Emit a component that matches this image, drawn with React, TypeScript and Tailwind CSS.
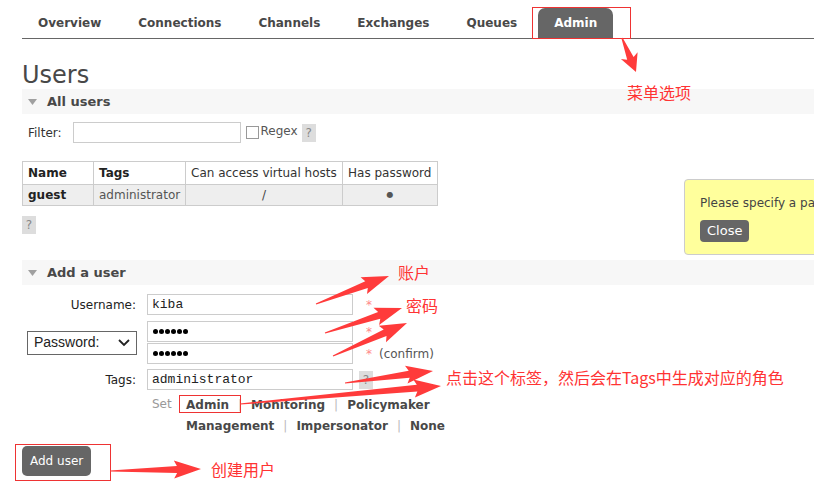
import React from "react";

const navItems = ["Overview", "Connections", "Channels", "Exchanges", "Queues"];

function arrowPoints(x1: number, y1: number, x2: number, y2: number) {
  const dx = x2 - x1;
  const dy = y2 - y1;
  const len = Math.sqrt(dx * dx + dy * dy);
  const ux = dx / len;
  const uy = dy / len;
  const nx = -uy;
  const ny = ux;
  const head = Math.min(24, len * 0.4);
  const bx = x2 - ux * head;
  const by = y2 - uy * head;
  const pts: [number, number][] = [
    [x1 + nx * 0.6, y1 + ny * 0.6],
    [bx + nx * 3.5, by + ny * 3.5],
    [bx - ux * 3 + nx * 9, by - uy * 3 + ny * 9],
    [x2, y2],
    [bx - ux * 3 - nx * 9, by - uy * 3 - ny * 9],
    [bx - nx * 3.5, by - ny * 3.5],
    [x1 - nx * 0.6, y1 - ny * 0.6],
  ];
  return pts.map((p) => p.map((v) => v.toFixed(1)).join(",")).join(" ");
}

const arrows: [number, number, number, number][] = [
  [622, 38, 636, 72],
  [316, 304, 389, 276],
  [325, 333, 402, 308],
  [333, 356, 407, 323],
  [345, 383, 433, 371],
  [240, 404, 441, 386],
  [110, 471, 201, 469],
];

function Help({ className = "" }: { className?: string }) {
  return (
    <span
      className={`inline-flex w-[14px] h-[18px] items-center justify-center bg-[#dddddd] text-[#888] text-[12px] ${className}`}
    >
      ?
    </span>
  );
}

function SectionBar({ title }: { title: string }) {
  return (
    <div className="flex items-center h-[25px] bg-[#f7f7f7] pl-[6px]">
      <svg width="9" height="6" viewBox="0 0 9 6" className="mr-[10px]">
        <polygon points="0,0 9,0 4.5,6" fill="#a0a0a0" />
      </svg>
      <span className="font-bold text-[13px] text-[#484848]">{title}</span>
    </div>
  );
}

function FakeInput({ value }: { value: string }) {
  return (
    <div className="w-[206px] h-[21px] border border-[#cccccc] flex items-center pl-[4px] text-[13px] text-[#222] font-['Liberation_Mono',monospace]">
      {value}
    </div>
  );
}

function Dots() {
  return (
    <div className="w-[206px] h-[21px] border border-[#cccccc] flex items-center gap-[1px] pl-[5px]">
      {[0, 1, 2, 3, 4, 5].map((i) => (
        <span key={i} className="w-[5px] h-[5px] rounded-full bg-black" />
      ))}
    </div>
  );
}

function Star() {
  return <span className="ml-[13px] text-[#ff8888] text-[12px] self-start mt-[2px]">*</span>;
}

function Sep() {
  return <span className="mx-[9px] font-normal text-[#bbb]">|</span>;
}

export default function App() {
  return (
    <div className="relative w-[814px] h-[490px] overflow-hidden bg-white text-[12px] text-[#444] font-['DejaVu_Sans',sans-serif]">
      <div className="pl-[22px]">
        {/* Nav */}
        <div className="flex items-end gap-[5px] pt-[8px] border-b border-[#666]">
          {navItems.map((n) => (
            <div key={n} className="h-[30px] px-4 flex items-center font-bold text-[#484848]">
              {n}
            </div>
          ))}
          <div className="h-[30px] px-4 flex items-center font-bold text-white bg-[#666] rounded-t-[7px]">
            Admin
          </div>
        </div>

        <h1 className="mt-[22px] text-[24px] leading-[28px] text-[#484848]">Users</h1>

        <SectionBar title="All users" />

        <div className="mt-[8px] pl-[6px] flex items-center">
          <span className="text-[12px] text-[#333]">Filter:</span>
          <div className="ml-[11px] w-[168px] h-[21px] border border-[#cccccc]" />
          <span className="ml-[5px] w-[13px] h-[13px] border border-[#999]" />
          <span className="ml-[2px] text-[12px] text-[#555] -mt-[3px]">Regex</span>
          <Help className="ml-[4px]" />
        </div>

        <table className="mt-[18px] border-collapse text-[12px] whitespace-nowrap">
          <thead>
            <tr className="h-[23px]">
              <th className="w-[71px] border border-[#cccccc] text-left pl-[5px] font-bold text-[#222]">Name</th>
              <th className="w-[92px] border border-[#cccccc] text-left pl-[5px] font-bold text-[#222]">Tags</th>
              <th className="w-[157px] border border-[#cccccc] text-left pl-[5px] font-normal text-[#333]">
                Can access virtual hosts
              </th>
              <th className="w-[95px] border border-[#cccccc] text-left pl-[5px] font-normal text-[#333]">
                Has password
              </th>
            </tr>
          </thead>
          <tbody>
            <tr className="h-[21px] bg-[#eeeeee]">
              <td className="border border-[#cccccc] pl-[5px] font-bold text-[#222]">guest</td>
              <td className="border border-[#cccccc] pl-[5px] text-[#555]">administrator</td>
              <td className="border border-[#cccccc] text-center text-[#444]">/</td>
              <td className="border border-[#cccccc] text-center text-[#555] text-[8px]">●</td>
            </tr>
          </tbody>
        </table>

        <Help className="mt-[10px]" />

        <div className="mt-[26px]">
          <SectionBar title="Add a user" />
        </div>

        {/* Form */}
        <div className="mt-[9px] flex flex-col text-[12px]">
          <div className="flex items-center">
            <span className="w-[125px] text-right pr-[11px] text-[#222]">Username:</span>
            <FakeInput value="kiba" />
            <Star />
          </div>

          <div className="mt-[6px] flex items-center">
            <div className="w-[125px] pl-[5px]">
              <div className="w-[110px] h-[24px] border border-[#666] flex items-center justify-between pl-[6px] pr-[6px] font-['Liberation_Sans',sans-serif] text-[14px] text-[#222]">
                <span>Password:</span>
                <svg width="12" height="8" viewBox="0 0 12 8">
                  <polyline points="1,1 6,6 11,1" fill="none" stroke="#222" strokeWidth="1.8" />
                </svg>
              </div>
            </div>
            <div className="flex flex-col gap-[1px]">
              <div className="flex items-center">
                <Dots />
                <Star />
              </div>
              <div className="flex items-center">
                <Dots />
                <Star />
                <span className="ml-[7px] text-[#555]">(confirm)</span>
              </div>
            </div>
          </div>

          <div className="mt-[5px] flex items-center">
            <span className="w-[125px] text-right pr-[11px] text-[#222]">Tags:</span>
            <FakeInput value="administrator" />
            <Help className="ml-[6px]" />
          </div>

          <div className="flex text-[12px] mt-[5px]">
            <span className="ml-[130px] w-[34px] text-[#999]">Set</span>
            <div className="flex flex-col">
              <div className="flex items-center h-[20px] font-bold text-[#484848]">
                <span>Admin</span>
                <Sep />
                <span>Monitoring</span>
                <Sep />
                <span>Policymaker</span>
              </div>
              <div className="flex items-center h-[20px] mt-[1px] font-bold text-[#484848]">
                <span>Management</span>
                <Sep />
                <span>Impersonator</span>
                <Sep />
                <span>None</span>
              </div>
            </div>
          </div>

          <div className="mt-[10px]">
            <button className="h-[30px] px-[8px] bg-[#666] text-white text-[12px] rounded-[5px]">Add user</button>
          </div>
        </div>
      </div>

      {/* Popup */}
      <div className="absolute left-[684px] top-[179px] w-[160px] h-[76px] bg-[#ffff9c] border border-[#cccccc] rounded-[4px] pl-[15px] pt-[14px]">
        <div className="text-[12px] text-[#444] whitespace-nowrap">Please specify a pa</div>
        <button className="mt-[8px] h-[22px] px-[7px] bg-[#666] text-white text-[13px] rounded-[4px]">Close</button>
      </div>

      {/* Annotations */}
      <svg className="absolute left-0 top-0 pointer-events-none" width="814" height="490">
        <rect x="532.5" y="7.5" width="98" height="31" fill="none" stroke="#ee3333" strokeWidth="1" />
        <rect x="179.5" y="395.5" width="61" height="17" fill="none" stroke="#ee3333" strokeWidth="1" />
        <rect x="15.5" y="444.5" width="95" height="36" fill="none" stroke="#ee3333" strokeWidth="1" />
        {arrows.map((a, i) => (
          <polygon key={i} points={arrowPoints(a[0], a[1], a[2], a[3])} fill="#ff3b3b" />
        ))}
      </svg>
      <div className="absolute left-[627px] top-[82px] text-[16px] leading-[20px] text-[#ff3333] font-['Noto_Sans_CJK_SC',sans-serif]">
        菜单选项
      </div>
      <div className="absolute left-[398px] top-[262px] text-[16px] leading-[20px] text-[#ff3333] font-['Noto_Sans_CJK_SC',sans-serif]">
        账户
      </div>
      <div className="absolute left-[406px] top-[295px] text-[16px] leading-[20px] text-[#ff3333] font-['Noto_Sans_CJK_SC',sans-serif]">
        密码
      </div>
      <div className="absolute left-[446px] top-[367px] text-[16px] leading-[20px] text-[#ff3333] font-['Noto_Sans_CJK_SC',sans-serif] whitespace-nowrap">
        点击这个标签，然后会在Tags中生成对应的角色
      </div>
      <div className="absolute left-[211px] top-[459px] text-[16px] leading-[20px] text-[#ff3333] font-['Noto_Sans_CJK_SC',sans-serif]">
        创建用户
      </div>
    </div>
  );
}
